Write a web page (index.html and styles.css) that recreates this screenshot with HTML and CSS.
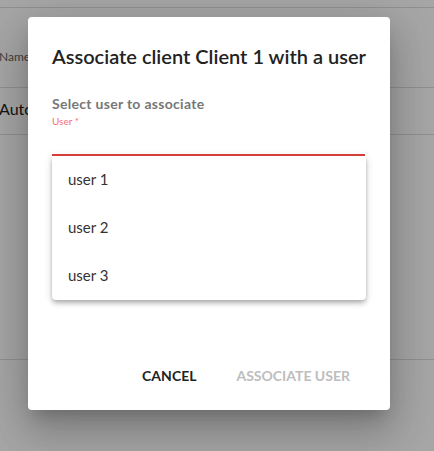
FILE: index.html
```html
<!DOCTYPE html>
<html>
<head>
<meta charset="utf-8">
<link rel="stylesheet" href="styles.css">
</head>
<body>
<div class="page">
  <div class="topbar"></div>
  <div class="row head"><span class="cell">Name</span></div>
  <div class="row"><span class="cell big">Auto</span></div>
  <div class="spacer"></div>
</div>
<div class="scrim"></div>
<div class="dialog">
  <h2 class="title">Associate client Client 1 with a user</h2>
  <div class="field">
    <div class="label">Select user to associate</div>
    <div class="sublabel">User *</div>
    <div class="input"></div>
    <ul class="menu">
      <li>user 1</li>
      <li>user 2</li>
      <li>user 3</li>
    </ul>
  </div>
  <div class="actions">
    <button class="btn">CANCEL</button>
    <button class="btn disabled">ASSOCIATE USER</button>
  </div>
</div>
</body>
</html>
```
FILE: styles.css
```css
html, body {
  margin: 0;
  padding: 0;
  background: #fff;
  font-family: "Lato", "Open Sans", sans-serif;
  width: 434px;
  height: 451px;
  overflow: hidden;
}
.page {
  display: flex;
  flex-direction: column;
}
.topbar {
  height: 7px;
  border-bottom: 1px solid #ddd;
}
.row {
  border-bottom: 1px solid #ddd;
  display: flex;
  align-items: center;
  height: 46px;
}
.row.head {
  height: 80px;
  align-items: flex-end;
  box-sizing: border-box;
  padding-bottom: 22px;
}
.cell {
  font-size: 12px;
  color: #666;
  margin-left: -1px;
  line-height: 16px;
}
.cell.big {
  font-size: 16px;
  color: #222;
  line-height: 20px;
  margin-top: -4px;
}
.spacer {
  height: 224px;
  border-bottom: 1px solid #ddd;
}
.scrim {
  position: absolute;
  inset: 0;
  background: rgba(0, 0, 0, 0.35);
}
.dialog {
  position: absolute;
  left: 28px;
  top: 17px;
  width: 362px;
  height: 393px;
  box-sizing: border-box;
  background: #fff;
  border-radius: 4px;
  box-shadow: 0 11px 15px -7px rgba(0,0,0,0.2), 0 24px 38px 3px rgba(0,0,0,0.14), 0 9px 46px 8px rgba(0,0,0,0.12);
  padding: 24px 24px 0 24px;
  display: flex;
  flex-direction: column;
}
.title {
  margin: 0;
  font-size: 20px;
  font-weight: 600;
  color: #222;
  line-height: 30px;
  padding-top: 0;
}
.field {
  margin-top: 24px;
  position: relative;
}
.label {
  font-size: 14px;
  font-weight: 700;
  color: #777;
  line-height: 18px;
  letter-spacing: 0.3px;
}
.sublabel {
  font-size: 10px;
  color: #f47171;
  line-height: 14px;
  margin-top: 1px;
}
.input {
  height: 26px;
  border-bottom: 2px solid #e0403a;
  margin-right: 1px;
}
.menu {
  list-style: none;
  margin: 0;
  padding: 0;
  background: #fff;
  border-radius: 0 0 4px 4px;
  box-shadow: 0 2px 4px -1px rgba(0,0,0,0.2), 0 4px 5px 0 rgba(0,0,0,0.14), 0 1px 10px 0 rgba(0,0,0,0.12);
}
.menu li {
  height: 48px;
  line-height: 46px;
  padding-left: 16px;
  font-size: 15px;
  color: #333;
}
.actions {
  margin-top: auto;
  height: 68px;
  display: flex;
  justify-content: flex-end;
  align-items: center;
  gap: 40px;
  padding-right: 16px;
}
.btn {
  border: 0;
  background: none;
  font-family: inherit;
  font-size: 14px;
  font-weight: 700;
  color: #222;
  padding: 0;
  line-height: 18px;
}
.btn.disabled { color: #bdbdbd; }
```
